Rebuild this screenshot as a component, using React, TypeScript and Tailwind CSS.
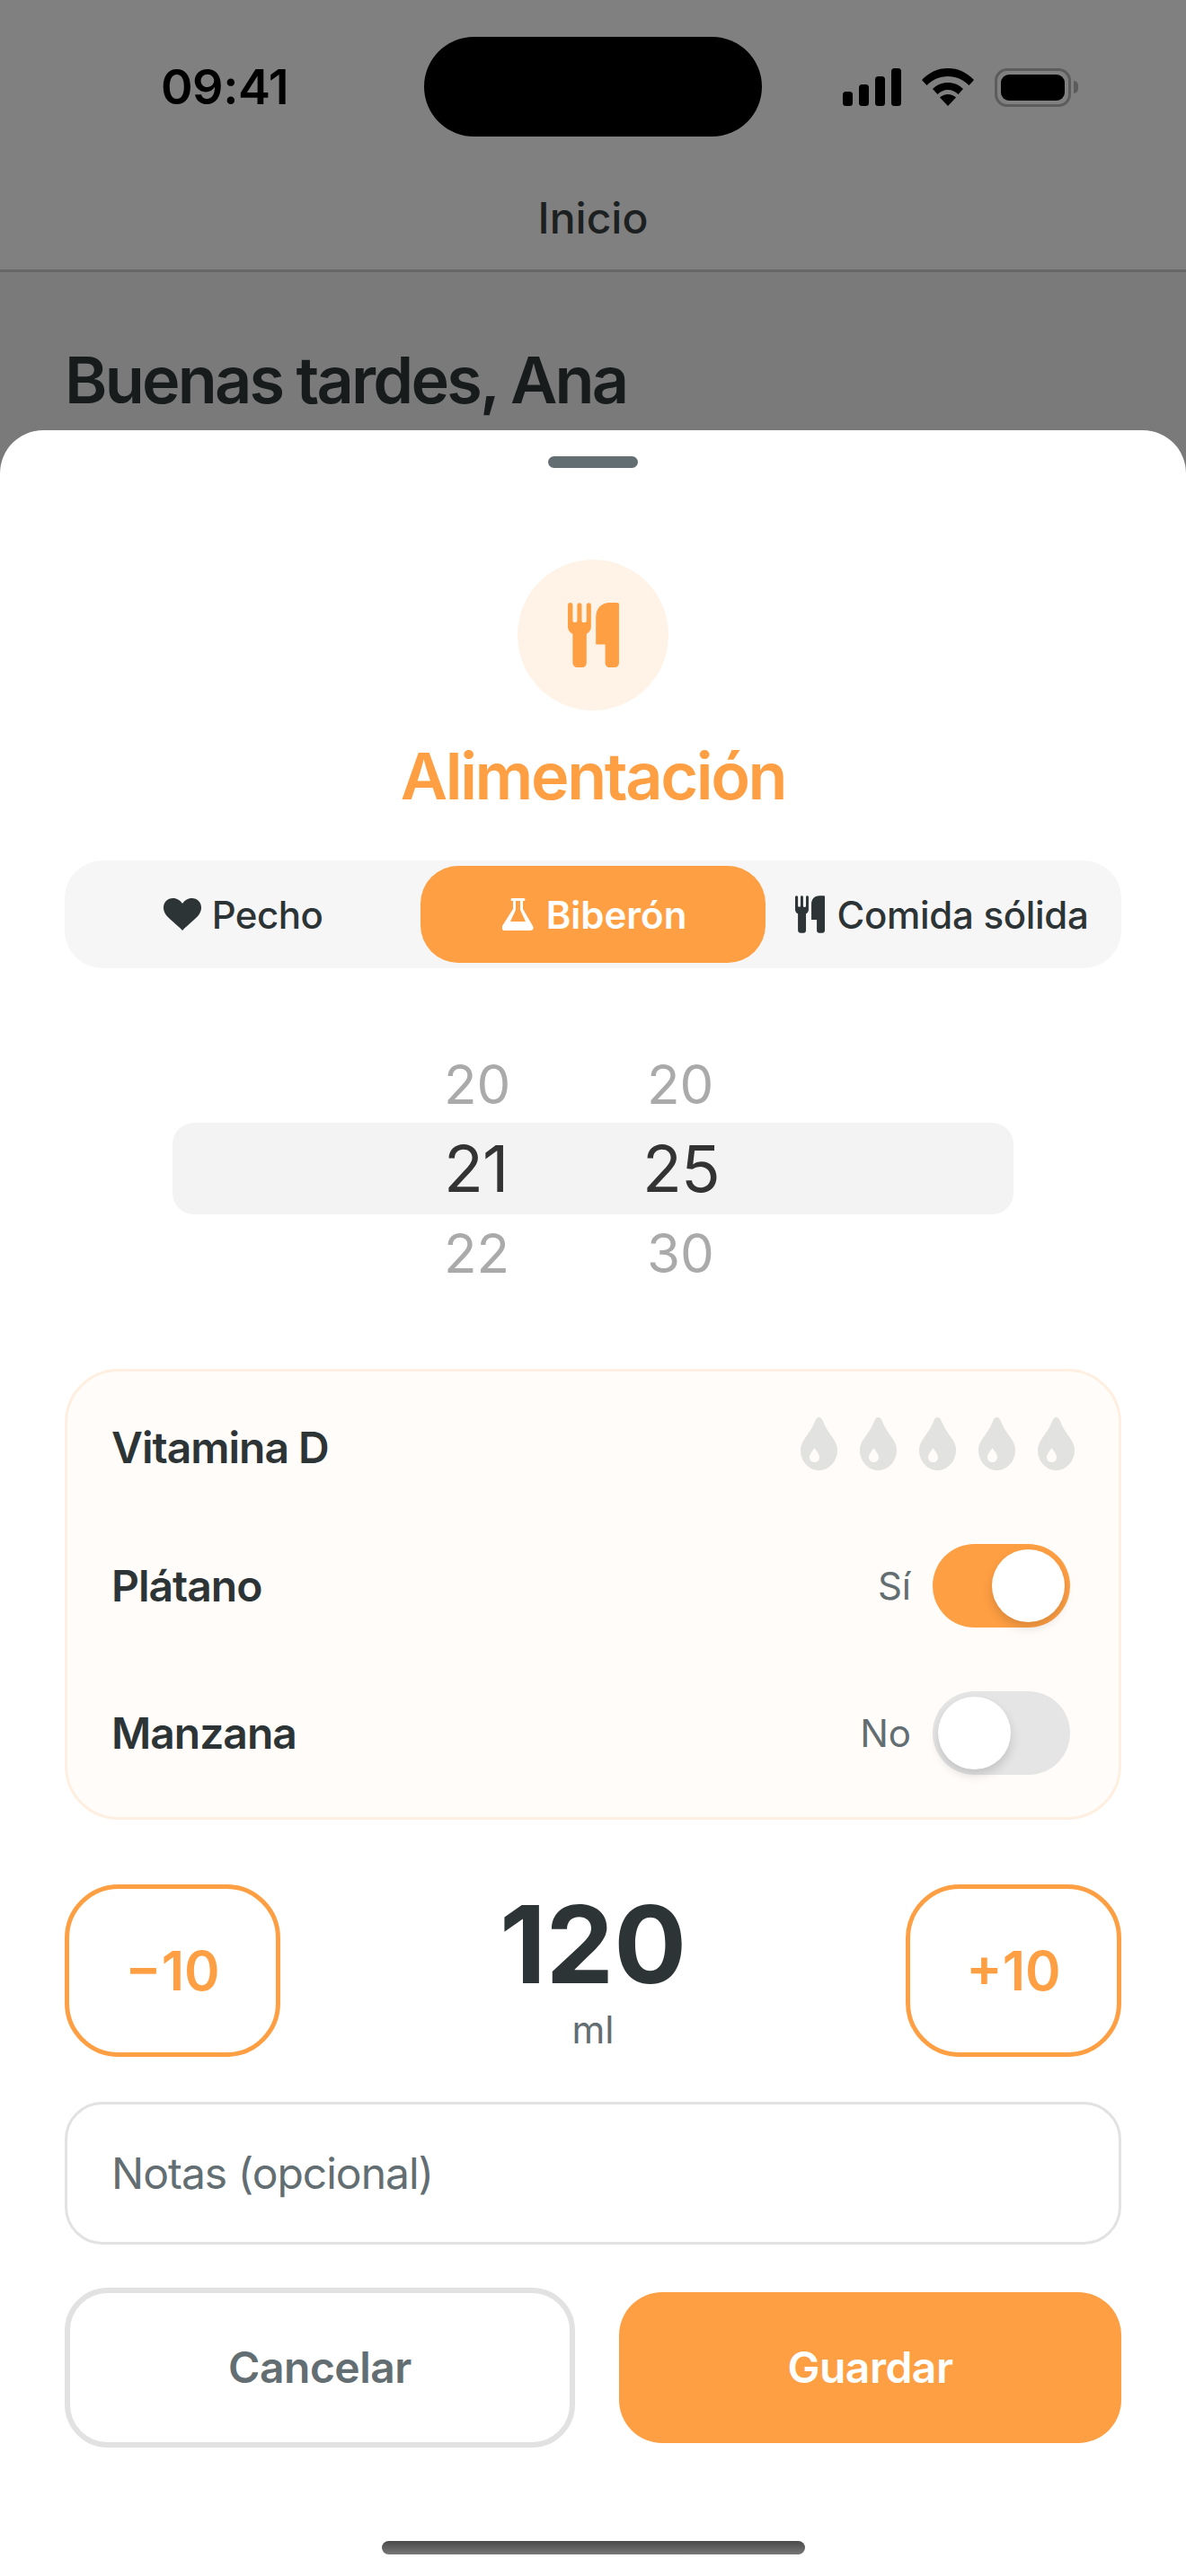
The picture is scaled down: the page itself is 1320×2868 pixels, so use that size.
const dark = "text-[#2d3436]";

function ForkKnife({ className }: { className: string }) {
  return (
    <svg viewBox="0 0 170 215" className={className} fill="currentColor">
      <path d="M0 8a8 8 0 0 1 16 0v50a7.5 7.5 0 0 0 15 0V8a7.5 7.5 0 0 1 15 0v50a8 8 0 0 0 16 0V8a7.5 7.5 0 0 1 15 0v72c0 12-8 20-15 24v95c0 9-6 16-15 16H32c-9 0-16-7-16-16v-95C8 100 0 92 0 80z" />
      <path d="M170 6v193c0 9-6 16-15 16h-16c-9 0-15-7-15-16v-60H93V50C93 20 110 0 140 0h24c4 0 6 2 6 6z" />
    </svg>
  );
}

function Drop() {
  return (
    <svg viewBox="0 0 41 59" className="h-[59px] w-[41px]">
      <path fill="#e2e2e0" d="M20.5 0c2.500 0 3.500 2 4.500 4.500 3 8 8 14 12 20 3 4.500 4 8 4 12 0 12-9 22.500-20.500 22.500S0 48.500 0 36.500c0-4 1-7.500 4-12 4-6 9-12 12-20C17 2 18 0 20.500 0z" />
      <path fill="#fffcf9" d="M15.500 34c1.500 3 5.500 6.500 5.500 10.500a5.500 5.500 0 0 1-11 0c0-4 4-7.500 5.500-10.500z" />
    </svg>
  );
}

function Toggle({ on }: { on: boolean }) {
  return (
    <div className={`flex h-[93px] w-[153px] items-center rounded-full px-[6px] ${on ? "justify-end bg-[#ff9f43]" : "justify-start bg-[#e5e5e5]"}`}>
      <div className="h-[81px] w-[81px] rounded-full bg-white shadow-[0_6px_12px_rgba(0,0,0,0.15)]" />
    </div>
  );
}

function OptionRow({ label, state, on }: { label: string; state: string; on: boolean }) {
  return (
    <div className="flex items-center justify-between">
      <span className={`text-[48px] font-semibold tracking-[-1px] ${dark}`}>{label}</span>
      <div className="mr-[3px] flex items-center gap-[24px]">
        <span className="text-[42px] text-[#636e72]">{state}</span>
        <Toggle on={on} />
      </div>
    </div>
  );
}

function StepButton({ label }: { label: string }) {
  return (
    <button className="flex h-[192px] w-[240px] items-center justify-center rounded-[60px] border-[5px] border-[#ff9f43] text-[60px] font-semibold text-[#ff9f43]">
      {label}
    </button>
  );
}

export default function App() {
  return (
    <div
      className="relative flex h-[2868px] w-[1320px] flex-col overflow-hidden bg-[#7a7a7a]"
      style={{ fontFamily: "Inter, 'Noto Sans', sans-serif" }}
    >
      {/* Background page */}
      <header className="relative h-[303px] shrink-0 border-b-[3px] border-[#666666] bg-[#808080]">
        <div className="flex h-[194px] items-center justify-between pl-[179px] pr-[120px]">
          <span className="text-[54px] leading-none font-semibold tracking-[-0.5px] text-black">09:41</span>
          <div className="flex items-center gap-[23px]">
            <svg viewBox="0 0 65 42" className="h-[42px] w-[65px]" fill="#000">
              <rect x="0" y="26" width="11" height="16" rx="3.500" />
              <rect x="18" y="18" width="11" height="24" rx="3.500" />
              <rect x="36" y="9" width="11" height="33" rx="3.500" />
              <rect x="54" y="0" width="11" height="42" rx="3.500" />
            </svg>
            <svg viewBox="0 0 58 42" className="h-[42px] w-[58px]" fill="#000">
              <path d="M29 0c11 0 21 4.500 29 13l-5.500 6C46 12.500 38 9 29 9S12 12.500 5.500 19L0 13C8 4.500 18 0 29 0z" />
              <path d="M29 16c6.500 0 12.500 2.500 17 7l-5.500 6c-3-3-7-5-11.500-5s-8.500 2-11.500 5L12 23c4.500-4.500 10.500-7 17-7z" />
              <path d="M29 29c3.500 0 6.500 1.200 9 3.500L29 42l-9-9.500c2.500-2.300 5.500-3.500 9-3.500z" />
            </svg>
            <div className="flex items-center">
              <div className="flex h-[43px] w-[85px] items-center justify-center rounded-[14px] border-[3.500px] border-[#5c5c5c]">
                <div className="h-[29px] w-[71px] rounded-[9px] bg-black" />
              </div>
              <div className="ml-[3px] h-[14px] w-[5px] rounded-r-full bg-[#5c5c5c]" />
            </div>
          </div>
        </div>
        <p className="mt-[20px] text-center text-[48px] leading-[58px] font-medium text-[#1c2021]">Inicio</p>
        <div className="absolute left-[472px] top-[41px] h-[111px] w-[376px] rounded-full bg-black" />
      </header>
      <h1 className="mt-[76px] pl-[72px] text-[72px] leading-[88px] font-semibold tracking-[-2.8px] text-[#171b1c]">Buenas tardes, Ana</h1>

      {/* Bottom sheet */}
      <section className="absolute inset-x-0 bottom-0 flex h-[2389px] flex-col rounded-t-[48px] bg-white px-[72px]">
        <div className="mx-auto mt-[29px] h-[13px] w-[100px] rounded-full bg-[#636e72]" />
        <div className="mx-auto mt-[102px] flex h-[168px] w-[168px] items-center justify-center rounded-full bg-[#fff3e8] text-[#ff9f43]">
          <ForkKnife className="h-[72px] w-[57px]" />
        </div>
        <h2 className="mt-[29px] text-center text-[72px] leading-[88px] font-semibold tracking-[-2.4px] text-[#ff9f43]">Alimentación</h2>

        <div className="mt-[50px] flex h-[120px] items-center rounded-[42px] bg-[#f6f6f6] p-[6px]">
          <div className={`flex h-full w-[390px] items-center justify-center gap-[12px] pr-[5px] text-[42px] font-[550] tracking-[-0.5px] ${dark}`}>
            <svg viewBox="0 0 42 36" className="h-[36px] w-[42px]" fill="currentColor">
              <path d="M21 36C18 32.500 13 28.500 8 24 3.500 20 0 16 0 10.500 0 4.500 4.500 0 10.500 0 15 0 18.500 2.500 21 6c2.500-3.500 6-6 10.500-6C37.500 0 42 4.500 42 10.500c0 5.500-3.500 9.500-8 13.500-5 4.500-10 8.500-13 12z" />
            </svg>
            Pecho
          </div>
          <div className="flex h-full w-[384px] items-center justify-center gap-[14px] rounded-[42px] bg-[#ff9f43] pl-[3px] text-[42px] font-semibold text-white">
            <svg viewBox="0 0 35 36" className="h-[36px] w-[35px]" fill="currentColor">
              <path fillRule="evenodd" d="M11 0h13a1.500 1.500 0 0 1 0 3h-1v9l11 19c1.500 2.500 0 5-3 5H3c-3 0-4.500-2.500-3-5L12 12V3h-1a1.500 1.500 0 0 1 0-3z M15 3h5v10l6 13H9l6-13z" />
            </svg>
            Biberón
          </div>
          <div className={`flex h-full flex-1 items-center justify-center gap-[13px] pl-[3px] text-[42px] font-[550] tracking-[-0.3px] ${dark}`}>
            <ForkKnife className="h-[42px] w-[33px]" />
            Comida sólida
          </div>
        </div>

        <div className="mt-[86px] flex flex-col">
          <div className="flex h-[86px] items-center pl-[422px] text-[60px] text-[#aaaaaa]">
            <span className="w-[226px]">20</span>
            <span>20</span>
          </div>
          <div className="mx-[120px] flex h-[102px] items-center rounded-[24px] bg-[#f3f3f3] pl-[302px] text-[72px] tracking-[-1px] text-[#333333]">
            <span className="w-[221px]">21</span>
            <span>25</span>
          </div>
          <div className="flex h-[86px] items-center pl-[422px] text-[60px] text-[#aaaaaa]">
            <span className="w-[226px]">22</span>
            <span>30</span>
          </div>
        </div>

        <div className="mt-[86px] flex h-[502px] flex-col rounded-[60px] border-[3px] border-[#ffefe0] bg-[#fffcf9] pl-[49px] pr-[51px] pt-[38px]">
          <div className="flex h-[94px] items-center justify-between">
            <span className={`text-[48px] font-semibold tracking-[-1px] ${dark}`}>Vitamina D</span>
            <div className="mb-[10px] mr-[-2px] flex gap-[25px]">
              <Drop />
              <Drop />
              <Drop />
              <Drop />
              <Drop />
            </div>
          </div>
          <div className="mt-[60px]">
            <OptionRow label="Plátano" state="Sí" on />
          </div>
          <div className="mt-[71px]">
            <OptionRow label="Manzana" state="No" on={false} />
          </div>
        </div>

        <div className="mt-[69px] flex items-center justify-between">
          <StepButton label="−10" />
          <div className="mb-[8px] flex flex-col items-center">
            <span className={`text-[120px] leading-[140px] font-bold ${dark}`}>120</span>
            <span className="text-[42px] leading-[50px] text-[#636e72]">ml</span>
          </div>
          <StepButton label="+10" />
        </div>

        <div className="mt-[47px] flex h-[159px] items-center rounded-[42px] border-[3px] border-[#e2e2e2] px-[49px] text-[48px] tracking-[-1px] text-[#636e72]">
          Notas (opcional)
        </div>

        <div className="mt-[48px] flex items-center gap-[49px]">
          <button className="h-[178px] w-[568px] rounded-[48px] border-[6px] border-[#e2e2e2] text-[48px] font-semibold tracking-[-0.5px] text-[#636e72]">
            Cancelar
          </button>
          <button className="h-[168px] flex-1 rounded-[48px] bg-[#ff9f43] text-[48px] font-semibold tracking-[-0.5px] text-white">
            Guardar
          </button>
        </div>
      </section>

      <div className="absolute bottom-[24px] left-[425px] h-[15px] w-[471px] rounded-[9px] bg-gradient-to-b from-[#4a4a4a] to-[#777777]" />
    </div>
  );
}
